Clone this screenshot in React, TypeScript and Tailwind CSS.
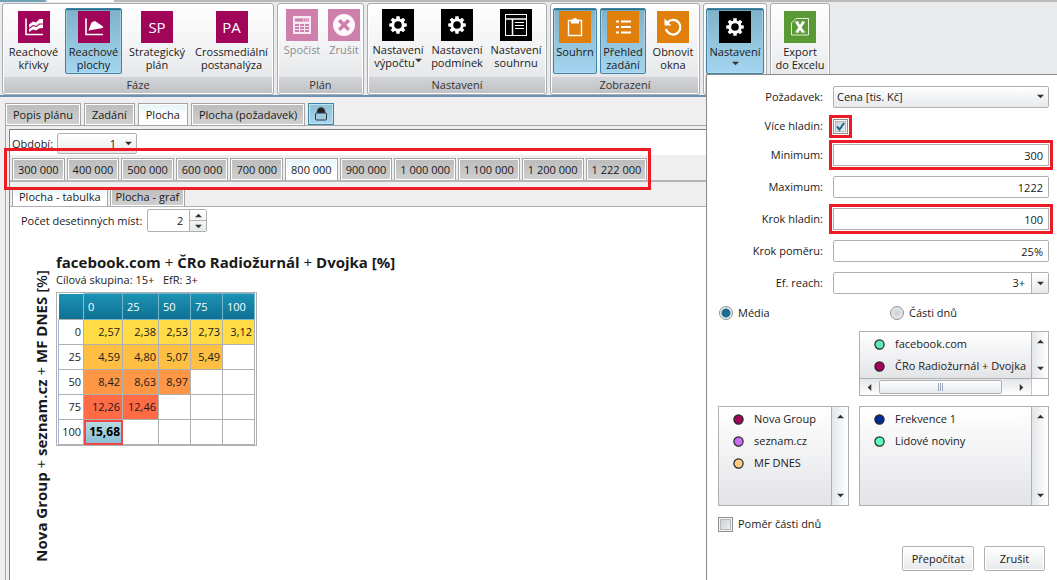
import type { ReactNode } from "react";
import clsx from "clsx";

/* ---------- icons ---------- */

function GearIcon() {
  return (
    <svg viewBox="0 0 32 32" className="size-8 bg-black" aria-hidden="true">
      <circle cx="16" cy="16" r="5.2" fill="none" stroke="#fff" strokeWidth="2.8" />
      {[0, 45, 90, 135, 180, 225, 270, 315].map((a) => (
        <path key={a} d="M14 10.6 L14.4 7.2 H17.6 L18 10.6 Z" fill="#fff" transform={`rotate(${a} 16 16)`} />
      ))}
    </svg>
  );
}

function CurvesIcon() {
  return (
    <svg viewBox="0 0 32 32" className="size-8 bg-[#a0055a]" aria-hidden="true">
      <path d="M8 7.5v16H25" fill="none" stroke="#fff" strokeWidth="1.6" />
      <path d="M11 13.500l4-3 3 1 3.500-3.500H25v9l-4 .5-3 2-3-1-4 2.500z" fill="#fff" />
      <path d="M11 17.500l4-3 3.500 1 3-2.500H25" fill="none" stroke="#a0055a" strokeWidth="1.100" />
    </svg>
  );
}

function AreaIcon() {
  return (
    <svg viewBox="0 0 32 32" className="size-8 bg-[#a0055a]" aria-hidden="true">
      <path d="M8 7.5v16H25" fill="none" stroke="#fff" strokeWidth="1.600" />
      <path d="M10.500 19.500l3-8 3.500-1.500 8 5.500V17z" fill="#fff" />
    </svg>
  );
}

function LettersIcon({ children }: { children: ReactNode }) {
  return (
    <span className="flex size-8 items-center justify-center bg-[#a0055a] text-[15px] leading-none text-white">
      {children}
    </span>
  );
}

function CalcIcon() {
  return (
    <svg viewBox="0 0 32 32" className="size-8 bg-[#cf7fac]" aria-hidden="true">
      <rect x="7" y="7" width="18" height="18" fill="#f8e8f1" />
      <path d="M9 9.500h14v3H9z" fill="#cf7fac" />
      <path d="M17 11h5" stroke="#fff" strokeWidth="1" strokeDasharray="1 1" />
      {[15, 18, 21].map((y) =>
        [9, 14, 19].map((x) => <rect key={`${x}-${y}`} x={x} y={y} width="4" height="2" fill="#cf7fac" />),
      )}
    </svg>
  );
}

function CancelIcon() {
  return (
    <svg viewBox="0 0 32 32" className="size-8 bg-[#cf7fac]" aria-hidden="true">
      <circle cx="16" cy="16" r="11" fill="#fdf8fb" />
      <path d="M11.200 11.200l9.600 9.600M20.800 11.200l-9.600 9.600" stroke="#cf7fac" strokeWidth="3.600" />
    </svg>
  );
}

function SummaryIcon() {
  return (
    <svg viewBox="0 0 32 32" className="size-8 bg-black" aria-hidden="true">
      <rect x="5.500" y="5.500" width="21" height="21" fill="none" stroke="#fff" />
      <path d="M5.500 10h21M12.500 10v16.500" stroke="#fff" strokeWidth="1.500" />
      <path d="M15 13.500h9M15 16.500h9M15 19.500h9" stroke="#fff" />
    </svg>
  );
}

function ClipboardIcon() {
  return (
    <svg viewBox="0 0 32 32" className="size-8 bg-[#e07f0c]" aria-hidden="true">
      <rect x="9.500" y="9.500" width="13" height="15" fill="none" stroke="#fff" strokeWidth="1.400" />
      <path d="M12 8.500h2a2.100 2.100 0 0 1 4 0H20v4h-8z" fill="#fff" />
    </svg>
  );
}

function ListIcon() {
  return (
    <svg viewBox="0 0 32 32" className="size-8 bg-[#e07f0c]" aria-hidden="true">
      <path d="M9 10.500h3M9 16h3M9 21.500h3M14 10.500h10M14 16h10M14 21.500h10" stroke="#fff" strokeWidth="2.200" />
    </svg>
  );
}

function RestoreIcon() {
  return (
    <svg viewBox="0 0 32 32" className="size-8 bg-[#e07f0c]" aria-hidden="true">
      <path d="M10.500 11.500A7.300 7.300 0 1 1 9 18" fill="none" stroke="#fff" strokeWidth="2.200" />
      <path d="M7.500 7.500v7h7z" fill="#fff" />
    </svg>
  );
}

function ExcelIcon() {
  return (
    <svg viewBox="0 0 32 32" className="size-8 bg-[#599a35]" aria-hidden="true">
      <path d="M12 7.500h12.500v16.500h-17V12z" fill="none" stroke="#e4f0dc" />
      <path d="M12.500 11l6.500 10M19.500 11L13 21" stroke="#fff" strokeWidth="2.800" />
      <path d="M11 11h4M17.500 11h3.500M11.500 21h3.500M17.500 21h4" stroke="#fff" strokeWidth="1.200" />
    </svg>
  );
}

function LockIcon() {
  return (
    <svg viewBox="0 0 14 16" width="14" height="16" aria-hidden="true">
      <path d="M3.500 8V5.500a3.500 3.500 0 0 1 7 0V8" fill="#222" stroke="#333" strokeWidth="1.400" />
      <rect x="1.500" y="7" width="11" height="7" rx="1" fill="#9fcbe0" stroke="#2b3a44" />
    </svg>
  );
}

function Arrow({ dir = "down", className }: { dir?: "up" | "down" | "left" | "right"; className?: string }) {
  const d = {
    down: "M0 2h8L4 6z",
    up: "M0 6h8L4 2z",
    left: "M6 0v8L2 4z",
    right: "M2 0v8l4-4z",
  }[dir];
  return (
    <svg viewBox="0 0 8 8" width="7" height="7" className={clsx("pointer-events-none", className)} aria-hidden="true">
      <path d={d} fill="#333" />
    </svg>
  );
}

/* ---------- ribbon ---------- */

function RibbonGroup({ title, children, tight }: { title?: string; children: ReactNode; tight?: boolean }) {
  return (
    <section className="relative flex h-[92px] flex-col rounded-[3px] border border-[#a9abae] bg-linear-to-b from-white via-[#f1f2f3] to-[#dfe1e4] shadow-[inset_0_0_0_1px_#fff]">
      <div className={clsx("flex flex-1 items-start gap-[3px] px-0.5", tight ? "pt-0.5" : "pt-1")}>{children}</div>
      <h2 className="mx-px mb-px h-4 bg-linear-to-b from-[#d2d4d7] to-[#c0c2c6] text-center leading-4 text-[#333]">
        {title}
      </h2>
    </section>
  );
}

type RibbonButtonProps = {
  icon: ReactNode;
  lines: string[];
  width: string;
  active?: boolean;
  disabled?: boolean;
  menu?: boolean;
};

function RibbonButton({ icon, lines, width, active, disabled, menu }: RibbonButtonProps) {
  return (
    <button
      type="button"
      disabled={disabled}
      className={clsx(
        "flex h-[66px] flex-col items-center border pt-0.5 leading-[13px] whitespace-nowrap",
        width,
        active
          ? "rounded-[2px] border-[#3f83a5] bg-linear-to-b from-[#7fb2c9] to-[#a4d5f0] shadow-[inset_0_1px_1px_#1d6484,inset_0_0_0_1px_#b4dcee]"
          : "border-transparent",
        disabled && "text-[#8d8d8d]",
      )}
    >
      {icon}
      <span className="mt-0.5">{lines[0]}</span>
      <span className="flex items-center">
        {lines[1]}
        {menu && <Arrow className={lines[1] ? "-mt-1" : "mt-0.5"} />}
      </span>
    </button>
  );
}

/* ---------- tabs ---------- */

function Tab({ label, active, pad = "px-[5px]" }: { label: string; active?: boolean; pad?: string }) {
  return (
    <button
      type="button"
      role="tab"
      aria-selected={!!active}
      className={clsx(
        "h-full flex-none border border-b-0 border-[#a5a5a5] text-center whitespace-nowrap shadow-[inset_0_0_0_1px_#fff]",
        active ? "bg-linear-to-b from-[#e3f3f8] to-white to-60%" : "bg-linear-to-b from-[#bcbcbc] to-[#d0d0d0]",
        pad,
      )}
    >
      {label}
    </button>
  );
}

const levels = [
  "300 000", "400 000", "500 000", "600 000", "700 000", "800 000",
  "900 000", "1 000 000", "1 100 000", "1 200 000", "1 222 000",
];

/* ---------- result table ---------- */

const headers = [
  { label: "0", width: "w-[39px]" },
  { label: "25", width: "w-9" },
  { label: "50", width: "w-8" },
  { label: "75", width: "w-8" },
  { label: "100", width: "w-8" },
];

const rows = [
  { label: "0", color: "bg-[#ffdc46]", values: ["2,57", "2,38", "2,53", "2,73", "3,12"] },
  { label: "25", color: "bg-[#ffbf42]", values: ["4,59", "4,80", "5,07", "5,49"] },
  { label: "50", color: "bg-[#ff9645]", values: ["8,42", "8,63", "8,97"] },
  { label: "75", color: "bg-[#ff6b45]", values: ["12,26", "12,46"] },
  { label: "100", color: "", values: ["15,68"] },
];

function ReachTable() {
  return (
    <div className="w-fit border border-[#b0b0b0] bg-white px-px">
      <table className="table-fixed border-collapse">
        <thead>
          <tr className="h-[26px] bg-linear-to-b from-[#1b93b4] to-[#0f7092] text-white">
            <td className="w-[25px] border-r border-[#7fc0d6]" />
            {headers.map((h) => (
              <th key={h.label} scope="col" className={clsx("border border-[#6fb6ce] pl-1 text-left font-normal", h.width)}>
                {h.label}
              </th>
            ))}
          </tr>
        </thead>
        <tbody>
          {rows.map((row) => (
            <tr key={row.label} className="h-[25px]">
              <th scope="row" className="border border-l-[#9fb4d8] border-[#b0b0b0] pr-0.5 text-right font-normal">
                {row.label}
              </th>
              {headers.map((h, i) => {
                const value = row.values[i];
                const selected = row.label === "100" && i === 0;
                return (
                  <td
                    key={h.label}
                    className={clsx(
                      "border border-[#b0b0b0] pr-0.5 text-right",
                      value && row.color,
                      selected && "bg-linear-to-b from-[#b9dbe6] to-[#86bccf] text-xs font-bold text-black outline-2 -outline-offset-2 outline-[#f04848]",
                    )}
                  >
                    {value}
                  </td>
                );
              })}
            </tr>
          ))}
        </tbody>
      </table>
    </div>
  );
}

/* ---------- settings panel ---------- */

const frame = "outline-[3px] outline-offset-1 outline-[#ed1c24]";
const field = "h-[22px] w-full border border-[#b0b0b0] bg-white";

function Row({ id, label, children }: { id: string; label: string; children: ReactNode }) {
  return (
    <div className="grid h-8 grid-cols-[105px_minmax(0,1fr)] items-center gap-[10px]">
      <label htmlFor={id} className="text-right">
        {label}
      </label>
      <div className="flex">{children}</div>
    </div>
  );
}

function TextRow({ id, label, value, marked }: { id: string; label: string; value: string; marked?: boolean }) {
  return (
    <Row id={id} label={label}>
      <input id={id} defaultValue={value} className={clsx(field, "px-[5px] text-right", marked ? frame : "rounded-[2px]")} />
    </Row>
  );
}

function CheckBox({ id, checked, marked }: { id: string; checked?: boolean; marked?: boolean }) {
  return (
    <span className={clsx("relative block size-[15px]", marked && frame)}>
      <input
        id={id}
        type="checkbox"
        defaultChecked={checked}
        className="block size-full appearance-none border border-[#8e8f8f] bg-linear-to-br from-[#c5cad0] to-[#f4f5f6] shadow-[inset_0_0_0_1px_#f4f4f4,inset_0_0_0_2px_#b4b8bc]"
      />
      {checked && (
        <svg viewBox="0 0 15 15" className="pointer-events-none absolute inset-0" aria-hidden="true">
          <path d="M4 7.500l2.500 3 4.500-6.500" fill="none" stroke="#17688a" strokeWidth="2" />
        </svg>
      )}
    </span>
  );
}

function Radio({ id, label, checked }: { id: string; label: string; checked?: boolean }) {
  return (
    <div className="flex items-center gap-[5px]">
      <input
        id={id}
        name="mode"
        type="radio"
        defaultChecked={checked}
        className="size-[14px] appearance-none rounded-full border border-[#8e8f8f] bg-radial from-[#c9cdd1] to-[#f4f4f4] checked:bg-[radial-gradient(circle,#1c6d90_0_4px,#eef1f3_5px)]"
      />
      <label htmlFor={id}>{label}</label>
    </div>
  );
}

function VScroll() {
  return (
    <div className="flex w-[17px] flex-none flex-col items-center justify-between border-l border-[#b0b0b0] bg-linear-to-r from-[#e3e6e9] to-white py-1.5">
      <button type="button" aria-label="Nahoru"><Arrow dir="up" className="block" /></button>
      <button type="button" aria-label="Dolů"><Arrow dir="down" className="block" /></button>
    </div>
  );
}

type Media = { name: string; color: string };

function MediaList({ items, className, horizontal }: { items: Media[]; className: string; horizontal?: boolean }) {
  return (
    <div className={clsx("flex flex-col border border-[#b0b0b0] bg-white", className)}>
      <div className="flex min-h-0 flex-1">
        <ul className="min-w-0 flex-1 overflow-hidden bg-linear-to-b from-white to-[#e3e4e7] pt-px">
          {items.map((m) => (
            <li key={m.name} className="flex h-[22px] items-center gap-[10px] pl-[14px] whitespace-nowrap">
              <svg viewBox="0 0 11 11" className="size-[11px] flex-none" aria-hidden="true">
                <circle cx="5.500" cy="5.500" r="4.600" fill={m.color} stroke="#222" strokeWidth="1.200" />
              </svg>
              {m.name}
            </li>
          ))}
        </ul>
        <VScroll />
      </div>
      {horizontal && (
        <div className="flex h-[17px] flex-none border-t border-[#b0b0b0]">
          <div className="flex flex-1 items-center justify-between bg-linear-to-b from-[#e3e6e9] to-white px-1.5">
            <button type="button" aria-label="Doleva"><Arrow dir="left" /></button>
            <div className="mr-4 ml-1.5 flex h-[14px] flex-1 items-center justify-center gap-px rounded-[2px] border border-[#b0b0b0] bg-linear-to-b from-white to-[#e6e9ec]">
              <i className="h-2 w-px bg-[#9aa7bd]" />
              <i className="h-2 w-px bg-[#9aa7bd]" />
              <i className="h-2 w-px bg-[#9aa7bd]" />
            </div>
            <button type="button" aria-label="Doprava"><Arrow dir="right" /></button>
          </div>
          <div className="w-[17px] border-l border-[#c8c8c8]" />
        </div>
      )}
    </div>
  );
}

function SettingsPanel() {
  const button =
    "h-[25px] rounded-[2px] border border-[#b0b0b0] bg-linear-to-b from-white to-[#e6eaed] shadow-[inset_0_0_0_1px_#fff]";
  return (
    <form className="absolute top-[70px] left-0.5 z-30 h-screen w-[352px] border border-[#8a8a8a] bg-white pt-1.5 pr-2 pl-[11px] text-[#1a1a1a]">
      <Row id="metric" label="Požadavek:">
        <div className="relative flex-1">
          <select
            id="metric"
            className="block h-[22px] w-full appearance-none rounded-[2px] border border-[#b0b0b0] bg-linear-to-b from-white to-[#e6e9eb] px-[3px]"
          >
            <option>Cena [tis. Kč]</option>
          </select>
          <Arrow className="absolute top-[7px] right-[5px]" />
        </div>
      </Row>
      <div className="-mt-[3px] -mb-[3px]">
        <Row id="multi" label="Více hladin:">
          <CheckBox id="multi" checked marked />
        </Row>
      </div>
      <TextRow id="min" label="Minimum:" value="300" marked />
      <TextRow id="max" label="Maximum:" value="1222" />
      <TextRow id="step" label="Krok hladin:" value="100" marked />
      <TextRow id="ratio" label="Krok poměru:" value="25%" />
      <Row id="ef" label="Ef. reach:">
        <div className={clsx(field, "flex rounded-[2px]")}>
          <input id="ef" defaultValue="3+" className="min-w-0 flex-1 bg-transparent pr-1.5 text-right" />
          <button
            type="button"
            aria-label="Vybrat"
            className="flex w-[17px] items-center justify-center border-l border-[#b0b0b0] bg-linear-to-b from-white to-[#e6e9eb]"
          >
            <Arrow />
          </button>
        </div>
      </Row>
      <div className="mt-1 grid h-5 grid-cols-2 items-center gap-3 pl-px">
        <Radio id="media" label="Média" checked />
        <Radio id="dayparts" label="Části dnů" />
      </div>
      <div className="mt-2 grid grid-cols-[131px_minmax(0,1fr)] gap-[10px]">
        <MediaList
          horizontal
          className="col-start-2 h-[65px]"
          items={[
            { name: "facebook.com", color: "#5ee6b4" },
            { name: "ČRo Radiožurnál + Dvojka", color: "#a0055a" },
          ]}
        />
        <MediaList
          className="col-start-1 h-[100px]"
          items={[
            { name: "Nova Group", color: "#a0055a" },
            { name: "seznam.cz", color: "#c86ef0" },
            { name: "MF DNES", color: "#ffcd82" },
          ]}
        />
        <MediaList
          className="h-[100px]"
          items={[
            { name: "Frekvence 1", color: "#002896" },
            { name: "Lidové noviny", color: "#5affb9" },
          ]}
        />
      </div>
      <div className="mt-2 flex h-5 items-center gap-[5px]">
        <CheckBox id="daypart-ratio" />
        <label htmlFor="daypart-ratio">Poměr části dnů</label>
      </div>
      <div className="mt-3 flex justify-end gap-[10px] pr-1">
        <button type="button" className={clsx(button, "w-[72px]")}>Přepočítat</button>
        <button type="button" className={clsx(button, "w-[61px]")}>Zrušit</button>
      </div>
    </form>
  );
}

/* ---------- page ---------- */

export default function App() {
  return (
    <div className="flex h-screen flex-col overflow-hidden bg-[#efefef] font-['Open_Sans','Noto_Sans',sans-serif] text-[11px] leading-4 text-[#1a1a1a]">
      <header className="flex-none border-b-2 border-[#6c93b5] bg-[#e9eaec]">
        <div className="flex h-0.5 bg-[#b9b9b9]">
          <div className="w-[45px] bg-[#6fa0b5]" />
          <div className="ml-0.5 w-[67px] bg-white" />
        </div>
        <div className="flex gap-[3px] pt-px pl-0.5">
          <RibbonGroup title="Fáze">
            <RibbonButton width="w-[57px]" icon={<CurvesIcon />} lines={["Reachové", "křivky"]} />
            <RibbonButton width="w-[57px]" icon={<AreaIcon />} lines={["Reachové", "plochy"]} active />
            <RibbonButton width="w-16" icon={<LettersIcon>SP</LettersIcon>} lines={["Strategický", "plán"]} />
            <RibbonButton width="w-[79px]" icon={<LettersIcon>PA</LettersIcon>} lines={["Crossmediální", "postanalýza"]} />
          </RibbonGroup>
          <RibbonGroup title="Plán" tight>
            <RibbonButton width="w-11" icon={<CalcIcon />} lines={["Spočíst"]} disabled />
            <RibbonButton width="w-[34px]" icon={<CancelIcon />} lines={["Zrušit"]} disabled />
          </RibbonGroup>
          <RibbonGroup title="Nastavení" tight>
            <RibbonButton width="w-14" icon={<GearIcon />} lines={["Nastavení", "výpočtu"]} menu />
            <RibbonButton width="w-14" icon={<GearIcon />} lines={["Nastavení", "podmínek"]} />
            <RibbonButton width="w-14" icon={<SummaryIcon />} lines={["Nastavení", "souhrnu"]} />
          </RibbonGroup>
          <RibbonGroup title="Zobrazení">
            <RibbonButton width="w-11" icon={<ClipboardIcon />} lines={["Souhrn"]} active />
            <RibbonButton width="w-[46px]" icon={<ListIcon />} lines={["Přehled", "zadání"]} active />
            <RibbonButton width="w-12" icon={<RestoreIcon />} lines={["Obnovit", "okna"]} />
          </RibbonGroup>
          <RibbonGroup>
            <RibbonButton width="w-[58px]" icon={<GearIcon />} lines={["Nastavení", ""]} active menu />
            <SettingsPanel />
          </RibbonGroup>
          <RibbonGroup>
            <RibbonButton width="w-[54px]" icon={<ExcelIcon />} lines={["Export", "do Excelu"]} />
          </RibbonGroup>
        </div>
      </header>

      <main className="flex min-h-0 flex-1 flex-col pt-1.5 pl-[5px]">
        <div role="tablist" className="flex h-[22px] flex-none items-stretch gap-[3px]">
          <Tab label="Popis plánu" pad="px-[7px]" />
          <Tab label="Zadání" pad="px-[7px]" />
          <Tab label="Plocha" pad="px-[7px]" active />
          <Tab label="Plocha (požadavek)" pad="px-[7px]" />
          <button
            type="button"
            aria-label="Zamknout"
            className="flex w-[26px] items-center justify-center border border-[#3f83a5] bg-linear-to-b from-[#8fc0d6] to-[#a9d6ee] shadow-[inset_0_0_0_1px_#c0e2f2]"
          >
            <LockIcon />
          </button>
        </div>

        <div className="flex min-h-0 flex-1 border-t border-l border-[#a5a5a5] pt-[3px] pl-[3px]">
          <div className="flex min-w-0 flex-1 flex-col border-t border-l border-[#808080] bg-white">
            <div className="flex h-[25px] flex-none items-center pt-0.5 pl-0.5">
              <label htmlFor="period" className="w-[45px]">Období:</label>
              <div className="relative">
                <select
                  id="period"
                  className="block h-[21px] w-20 appearance-none rounded-[2px] border border-[#b0b0b0] bg-linear-to-b from-white to-[#e6e9eb] pr-5 text-right [text-align-last:right]"
                >
                  <option>1</option>
                </select>
                <Arrow className="absolute top-[7px] right-[5px]" />
              </div>
            </div>

            <div className="flex-none border-b border-[#b0b0b0] bg-[#efefef] pt-[3px]">
              <div className="border-b-2 border-[#b5b5b5] pl-0.5">
                <div role="tablist" className="relative flex h-[22px] w-fit items-stretch gap-0.5">
                  {levels.map((level) => (
                    <Tab key={level} label={level} active={level === "800 000"} />
                  ))}
                  <div className="pointer-events-none absolute -top-[10px] -right-1 -bottom-[10px] -left-2 z-10 border-[3px] border-[#ed1c24]" />
                </div>
              </div>
              <div role="tablist" className="flex h-[24px] items-stretch gap-0.5 pt-[5px] pl-0.5">
                <Tab label="Plocha - tabulka" pad="px-1.5" active />
                <Tab label="Plocha - graf" />
              </div>
            </div>

            <div className="flex items-center gap-[5px] pt-[2px] pl-[11px]">
              <label htmlFor="decimals">Počet desetinných míst:</label>
              <div className="flex h-[23px] w-[60px] rounded-[2px] border border-[#b0b0b0]">
                <input id="decimals" defaultValue="2" className="min-w-0 flex-1 pr-1.5 text-right" />
                <div className="flex w-[17px] flex-col border-l border-[#b0b0b0] bg-linear-to-b from-white to-[#e6e9eb]">
                  <button type="button" aria-label="Zvýšit" className="flex flex-1 items-center justify-center border-b border-[#b0b0b0]">
                    <Arrow dir="up" />
                  </button>
                  <button type="button" aria-label="Snížit" className="flex flex-1 items-center justify-center">
                    <Arrow />
                  </button>
                </div>
              </div>
            </div>

            <div className="flex gap-[5px] pt-5 pl-[21px]">
              <p className="mt-[18px] rotate-180 text-[15px] leading-5 font-bold whitespace-nowrap [writing-mode:vertical-rl]">
                Nova Group <span className="font-normal">+</span> seznam.cz <span className="font-normal">+</span> MF DNES{" "}
                <span className="font-semibold">[%]</span>
              </p>
              <div>
                <h1 className="text-[15px] leading-5 font-bold whitespace-nowrap">
                  facebook.com <span className="font-normal">+</span> ČRo Radiožurnál <span className="font-normal">+</span> Dvojka [%]
                </h1>
                <p className="mb-1 whitespace-pre">{"Cílová skupina: 15+   EfR: 3+"}</p>
                <ReachTable />
              </div>
            </div>
          </div>
        </div>
      </main>
    </div>
  );
}
